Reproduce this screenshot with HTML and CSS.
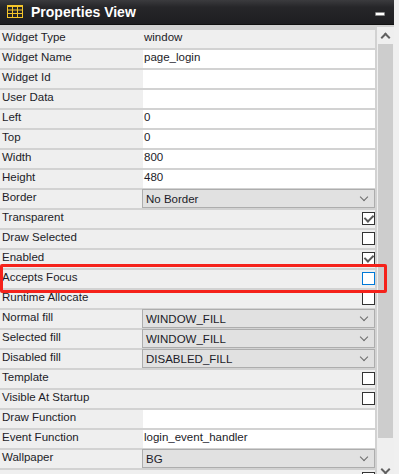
FILE: index.html
```html
<!DOCTYPE html>
<html lang="en">
<head>
  <meta charset="UTF-8" />
  <title>Properties View</title>
  <link rel="stylesheet" href="styles.css">
</head>
<body>
  <div class="panel">
    <div class="titlebar">
      <svg class="title-icon" width="16" height="13" viewBox="0 0 16 13">
        <rect x="0.5" y="0.5" width="15" height="12" fill="none" stroke="#f5c52a" stroke-width="1"/>
        <rect x="0" y="0" width="16" height="2" fill="#f5c52a"/>
        <line x1="5.5" y1="1" x2="5.5" y2="12" stroke="#f5c52a"/>
        <line x1="10.5" y1="1" x2="10.5" y2="12" stroke="#f5c52a"/>
        <line x1="1" y1="5" x2="15" y2="5" stroke="#f5c52a"/>
        <line x1="1" y1="8.5" x2="15" y2="8.5" stroke="#f5c52a"/>
      </svg>
      <span class="title">Properties View</span>
      <span class="minimize"></span>
    </div>

    <div class="content">
      <div class="props">
        <div class="row"><div class="label">Widget Type</div><div class="value readonly">window</div></div>
        <div class="row"><div class="label">Widget Name</div><div class="value">page_login</div></div>
        <div class="row"><div class="label">Widget Id</div><div class="value"></div></div>
        <div class="row"><div class="label">User Data</div><div class="value"></div></div>
        <div class="row"><div class="label">Left</div><div class="value">0</div></div>
        <div class="row"><div class="label">Top</div><div class="value">0</div></div>
        <div class="row"><div class="label">Width</div><div class="value">800</div></div>
        <div class="row"><div class="label">Height</div><div class="value">480</div></div>
        <div class="row"><div class="label">Border</div><div class="select"><span>No Border</span><span class="chev"></span></div></div>
        <div class="row check-row"><div class="label">Transparent</div><span class="box checked"></span></div>
        <div class="row check-row"><div class="label">Draw Selected</div><span class="box"></span></div>
        <div class="row check-row"><div class="label">Enabled</div><span class="box checked"></span></div>
        <div class="row check-row"><div class="label">Accepts Focus</div><span class="box focused"></span></div>
        <div class="row check-row"><div class="label">Runtime Allocate</div><span class="box"></span></div>
        <div class="row"><div class="label">Normal fill</div><div class="select"><span>WINDOW_FILL</span><span class="chev"></span></div></div>
        <div class="row"><div class="label">Selected fill</div><div class="select"><span>WINDOW_FILL</span><span class="chev"></span></div></div>
        <div class="row"><div class="label">Disabled fill</div><div class="select"><span>DISABLED_FILL</span><span class="chev"></span></div></div>
        <div class="row check-row"><div class="label">Template</div><span class="box"></span></div>
        <div class="row check-row"><div class="label">Visible At Startup</div><span class="box"></span></div>
        <div class="row"><div class="label">Draw Function</div><div class="value"></div></div>
        <div class="row"><div class="label">Event Function</div><div class="value">login_event_handler</div></div>
        <div class="row"><div class="label">Wallpaper</div><div class="select"><span>BG</span><span class="chev"></span></div></div>
        <div class="row check-row"><div class="label"></div><span class="box"></span></div>
      </div>

      <div class="scrollbar">
        <div class="sb-btn"><span class="arrow up"></span></div>
        <div class="sb-thumb"></div>
        <div class="sb-track"></div>
        <div class="sb-btn"><span class="arrow down"></span></div>
      </div>
    </div>

    <div class="highlight"></div>
  </div>
</body>
</html>
```

FILE: styles.css
```css
body {
  margin: 0;
  background: #f0f0f0;
  font-family: "Liberation Sans", Arial, sans-serif;
  font-size: 11.5px;
  color: #1c1c28;
  overflow: hidden;
}
.panel {
  position: relative;
  width: 394px;
  height: 474px;
  background: #d2d2d2;
  overflow: hidden;
}
.titlebar {
  height: 25px;
  box-sizing: border-box;
  display: flex;
  align-items: center;
  padding: 0 9px 0 7px;
  background: linear-gradient(#3b3b3e, #262629 30%, #1e1e21);
  border-bottom: 1px solid #111;
}
.title-icon {
  display: block;
  margin-top: -1px;
}
.title {
  flex: 1;
  margin-left: 8px;
  color: #fff;
  font-weight: bold;
  font-size: 14px;
  margin-top: -1px;
}
.minimize {
  width: 8px;
  height: 2px;
  background: #fff;
  border: 1px solid #8a8a8a;
  border-radius: 1px;
  margin-top: 3px;
}
.content {
  display: flex;
  align-items: flex-start;
  padding-top: 5px;
}
.props {
  width: 375px;
  flex: none;
}
.row {
  display: flex;
  height: 18px;
  margin-bottom: 2px;
  background: #efefef;
}
.label {
  width: 141px;
  box-sizing: border-box;
  padding-left: 2px;
  line-height: 15px;
  white-space: nowrap;
}
.value {
  flex: 1;
  margin-left: 2px;
  padding-left: 1px;
  background: #fff;
  line-height: 15px;
}
.value.readonly {
  background: #efefef;
}
.select {
  flex: 1;
  margin: -1px 0 0 1px;
  height: 19px;
  box-sizing: border-box;
  display: flex;
  align-items: center;
  justify-content: space-between;
  padding: 1px 7px 0 3px;
  background: #e1e1e1;
  border: 1px solid #adadad;
}
.chev {
  width: 5px;
  height: 5px;
  border-right: 1px solid #6a6a6a;
  border-bottom: 1px solid #6a6a6a;
  transform: rotate(45deg);
  margin-top: -4px;
}
.check-row .label {
  flex: 1;
}
.box {
  width: 13px;
  height: 13px;
  box-sizing: border-box;
  margin-top: 2px;
  border: 1px solid #333;
  background: #fff;
  position: relative;
}
.box.focused {
  border-color: #0078d7;
}
.box.checked::after {
  content: "";
  position: absolute;
  left: 3px;
  top: 0px;
  width: 4px;
  height: 7px;
  border-right: 2px solid #5a5a5a;
  border-bottom: 2px solid #5a5a5a;
  transform: rotate(45deg);
}
.scrollbar {
  width: 17px;
  margin: -3px 0 0 2px;
  background: #efefef;
  display: flex;
  flex-direction: column;
}
.sb-btn {
  height: 17px;
  display: flex;
  align-items: center;
  justify-content: center;
}
.sb-thumb {
  height: 394px;
  margin: 0 1px;
  background: #cdcdcd;
}
.sb-track {
  height: 24px;
}
.arrow {
  width: 5px;
  height: 5px;
  border-left: 2px solid #606060;
  border-top: 2px solid #606060;
}
.arrow.up {
  transform: rotate(45deg);
  margin-top: 4px;
}
.arrow.down {
  transform: rotate(225deg);
  margin-top: -2px;
}
.highlight {
  position: absolute;
  left: 0;
  top: 264px;
  width: 387px;
  height: 29px;
  box-sizing: border-box;
  border: 3px solid #f5221b;
  border-radius: 2px;
}
```
